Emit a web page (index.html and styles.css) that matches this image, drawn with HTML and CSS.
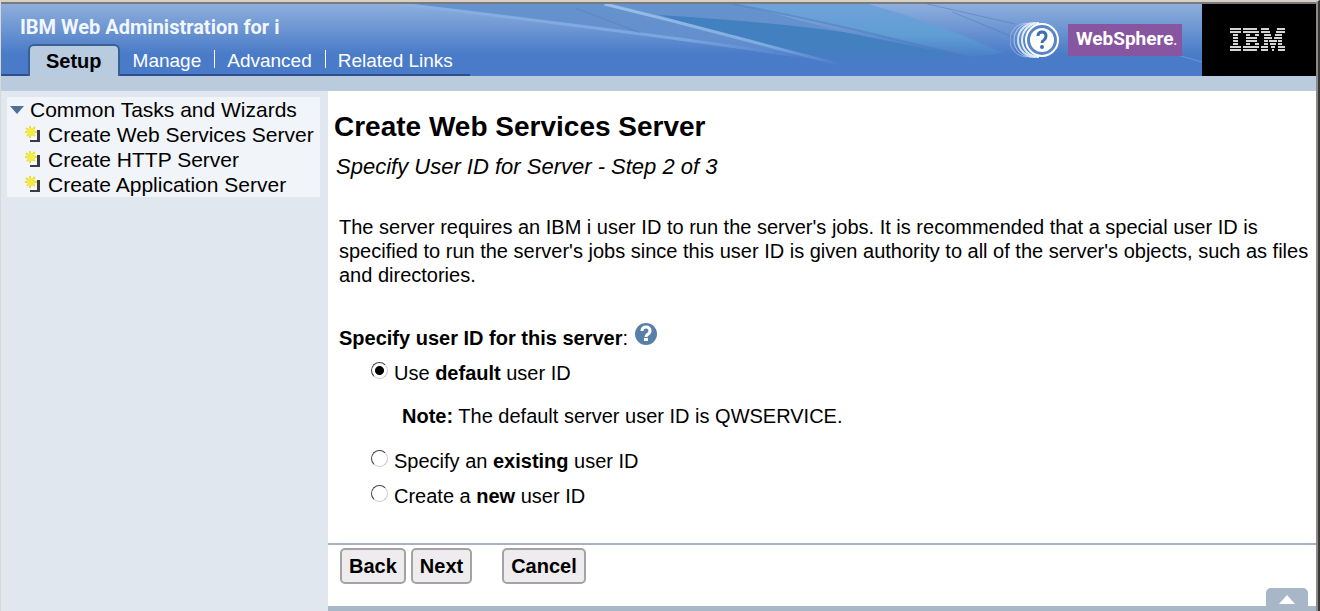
FILE: index.html
```html
<!DOCTYPE html>
<html lang="en">
<head>
<meta charset="utf-8">
<title>IBM Web Administration for i</title>
<link rel="stylesheet" href="styles.css">
</head>
<body>
<svg class="defs" aria-hidden="true">
  <symbol id="new-item" viewBox="0 0 15 17">
    <path d="M6 5h5v9H6z" fill="#fff"/>
    <path d="M12 4h3v12H5v-2h7z" fill="#3a3b44"/>
    <path d="M5 0v12M0 6h12M1 2l9 8M10 1l-8 9" stroke="#e9df45" stroke-width="2"/>
    <circle cx="6" cy="6" r="4" fill="#f3ea45"/>
  </symbol>
</svg>
<header class="banner">
  <svg class="waves" viewBox="0 0 1202 72" preserveAspectRatio="none" aria-hidden="true">
    <defs>
      <linearGradient id="ray" x2="0" y2="1"><stop stop-color="#6693cc"/><stop offset=".6" stop-color="#638fce"/><stop offset="1" stop-color="#5382cb"/></linearGradient>
      <linearGradient id="base" x2="0" y2="1"><stop stop-color="#4280c0"/><stop offset=".6" stop-color="#4280c0"/><stop offset="1" stop-color="#4a7bc8"/></linearGradient>
      <linearGradient id="sky" x2="0" y2="1"><stop stop-color="#70a2d8"/><stop offset=".6" stop-color="#5f9dd3"/><stop offset="1" stop-color="#4a7fc8"/></linearGradient>
      <linearGradient id="beam" gradientUnits="userSpaceOnUse" x1="600" y1="0" x2="840" y2="0"><stop stop-color="#9cc0ea"/><stop offset=".7" stop-color="#7caae0"/><stop offset="1" stop-color="#4a7bc8"/></linearGradient>
      <linearGradient id="beam2" gradientUnits="userSpaceOnUse" x1="400" y1="0" x2="810" y2="0"><stop stop-color="#8bb1e3"/><stop offset=".7" stop-color="#78a5df"/><stop offset="1" stop-color="#4a7bc8"/></linearGradient>
    </defs>
    <path d="M400 0H740L843 28 969 53 850 60 780 51 641 30z" fill="url(#ray)"/>
    <path d="M658 11Q760 17 843 28L969 53Q920 64 835 60L738 34z" fill="url(#base)"/>
    <path d="M733 0H868Q940 20 1003 49L969 53 856 26z" fill="url(#sky)"/>
    <path d="M733 0Q800 13 856 26L969 53" fill="none" stroke="#4b79b8" stroke-width="2" opacity=".45"/>
    <path d="M400 0Q520 14 641 30T810 54" fill="none" stroke="url(#beam2)" stroke-width="3"/>
    <path d="M604 0Q670 16 738 34T838 60" fill="none" stroke="url(#beam)" stroke-width="3"/>
    <path d="M927 0 1015 20M952 8 1020 36M575 4l65 25" fill="none" stroke="#5079b4" opacity=".5"/>
    <path d="M1090 34Q1150 42 1202 58" fill="none" stroke="#7da5df" opacity=".7"/>
  </svg>
  <div class="heading">
    <div class="product">IBM Web Administration for i</div>
    <nav class="tabs">
      <a class="tab active" href="#setup">Setup</a>
      <a class="tab" href="#manage">Manage</a>
      <a class="tab" href="#advanced">Advanced</a>
      <a class="tab" href="#links">Related Links</a>
    </nav>
  </div>
  <div class="brands">
    <a class="help-link" href="#help" aria-label="Help">
      <svg width="50" height="38" viewBox="0 0 50 38" fill="none" stroke="#e4eefa" aria-hidden="true">
        <path d="M17 2A17 17 0 0 0 17 36" opacity=".4"/>
        <path d="M21 2A17 17 0 0 0 21 36" opacity=".65"/>
        <path d="M25 2A17 17 0 0 0 25 36" stroke-width="2" opacity=".85"/>
        <path d="M29 2A17 17 0 0 0 29 36" stroke-width="2"/>
        <circle cx="32" cy="19" r="16" fill="#5686c8" stroke="#fff" stroke-width="2"/>
        <circle cx="32" cy="19" r="12" fill="#fff" stroke="none"/>
        <path d="M28 15q0-4 4-4t4 4q0 2-2 4-2 1-2 3" stroke="#3e6faf" stroke-width="3"/>
        <circle cx="32" cy="26" r="2" fill="#3e6faf" stroke="none"/>
      </svg>
    </a>
    <span class="websphere">WebSphere<small>.</small></span>
  </div>
  <div class="ibm">
    <svg width="55" height="24" viewBox="0 0 55 24" role="img" aria-label="IBM">
      <path stroke="#d4d4d4" stroke-width="2" d="M0 1h11M0 4h11M3 7h5M3 10h5M3 13h5M3 16h5M0 19h11M0 22h11M13 1h14M13 4h16M16 7h4M25 7h4M16 10h11M16 13h11M16 16h4M25 16h4M13 19h16M13 22h14M31 1h8M47 1h8M31 4h9M46 4h9M34 7h7M45 7h7M34 10h8M44 10h8M34 13h4M39 13h8M48 13h4M34 16h4M40 16h6M48 16h4M31 19h7M41 19h4M48 19h7M31 22h7M42 22h2M48 22h7"/>
    </svg>
  </div>
</header>
<div class="band"></div>
<div class="layout">
  <aside class="sidebar">
    <nav class="tree" aria-label="Common tasks">
      <button class="group" type="button"><svg width="14" height="8" aria-hidden="true"><path d="M0 0h14L7 8z" fill="#4f7096"/></svg>Common Tasks and Wizards</button>
      <a href="#web-services"><svg width="15" height="17" aria-hidden="true"><use href="#new-item"/></svg>Create Web Services Server</a>
      <a href="#http"><svg width="15" height="17" aria-hidden="true"><use href="#new-item"/></svg>Create HTTP Server</a>
      <a href="#application"><svg width="15" height="17" aria-hidden="true"><use href="#new-item"/></svg>Create Application Server</a>
    </nav>
  </aside>
  <main class="content">
    <form class="wizard">
      <div class="body">
        <h1>Create Web Services Server</h1>
        <p class="step">Specify User ID for Server - Step 2 of 3</p>
        <p class="intro">The server requires an IBM i user ID to run the server's jobs. It is recommended that a special user ID is specified to run the server's jobs since this user ID is given authority to all of the server's objects, such as files and directories.</p>
        <fieldset>
          <legend><b>Specify user ID for this server</b>:
            <a href="#user-id-help" aria-label="Help for user ID"><svg width="24" height="24" viewBox="0 0 24 24" aria-hidden="true"><circle cx="12" cy="12" r="11" fill="#587fa9"/><path d="M8 9q0-4 4-4t4 4q0 2-3 4-1 1-1 2" fill="none" stroke="#fff" stroke-width="3"/><path d="M10 16h4v3h-4z" fill="#fff"/></svg></a>
          </legend>
          <label class="choice"><input type="radio" name="user" checked><span>Use <b>default</b> user ID</span></label>
          <p class="note"><b>Note:</b> The default server user ID is QWSERVICE.</p>
          <label class="choice"><input type="radio" name="user"><span>Specify an <b>existing</b> user ID</span></label>
          <label class="choice"><input type="radio" name="user"><span>Create a <b>new</b> user ID</span></label>
        </fieldset>
      </div>
      <div class="actions">
        <button type="button">Back</button>
        <button type="button">Next</button>
        <button class="cancel" type="button">Cancel</button>
      </div>
    </form>
    <div class="footer"><button class="expand" type="button" aria-label="Expand panel"><svg width="16" height="9" aria-hidden="true"><path d="M0 9 8 0l8 9z" fill="#fff"/></svg></button></div>
  </main>
</div>
</body>
</html>
```
FILE: styles.css
```css
* { box-sizing: border-box; }
body {
  margin: 0;
  min-height: 100vh;
  display: flex;
  flex-direction: column;
  border-top: 2px solid #d8d0c4;
  border-left: 1px solid #d8d8d8;
  border-right: 4px ridge #8d8b86;
  background: #fff;
  color: #000;
  font: 20px/24px "Liberation Sans", Arial, sans-serif;
}
a { color: inherit; text-decoration: none; }
p { margin: 0; }
svg { display: block; flex: none; }
.defs { position: absolute; width: 0; height: 0; }
.banner {
  position: relative;
  display: flex;
  border-top: 2px solid #777b80;
  background: linear-gradient(#8eafdc, #4a7bc8 70%);
}
.waves { position: absolute; left: 0; top: 0; width: calc(100% - 114px); height: 100%; }
.heading { position: relative; flex: 1; }
.product {
  padding: 10px 0 0 19px;
  color: #f2f6ff;
  font: bold 20px/26px Roboto, "Liberation Sans", sans-serif;
}
.tabs { display: flex; width: 469px; padding: 4px 0 0 27px; box-shadow: inset 0 -2px #2d508c; }
.tab { position: relative; flex: none; margin-top: 2px; padding: 2px 13px; line-height: 26px; font-size: 19px; color: #fff; }
.tab + .tab + .tab::before { content: ""; position: absolute; left: 0; top: 4px; width: 1px; height: 18px; background: #fff; }
.active {
  margin-top: 0;
  padding: 2px 16px;
  border: 2px solid #395f93;
  border-bottom: 0;
  border-radius: 6px 6px 0 0;
  background: #b9cbde;
  color: #000;
  font-size: 20px;
  font-weight: bold;
}
.brands { position: relative; display: flex; align-items: center; gap: 8px; padding-right: 20px; }
.websphere {
  padding: 0 5px 0 8px;
  background: #8855a0;
  color: #fff;
  font: bold 19px/30px Roboto, "Liberation Sans", sans-serif;
}
.websphere small { font-size: 12px; }
.ibm { width: 114px; display: flex; align-items: center; justify-content: center; padding-right: 4px; background: #000; }
.band { height: 15px; background: #b9cbdd; }
.layout { flex: 1; display: flex; }
.sidebar { width: 327px; flex: none; padding: 6px 8px 0 6px; background: #e0e7ef; }
.tree { background: #f1f4f9; line-height: 25px; white-space: nowrap; }
.tree a, .group { display: flex; align-items: center; font-size: 21px; }
.tree a { gap: 8px; padding-left: 18px; }
.group { gap: 6px; padding: 0 0 0 3px; border: 0; background: none; color: inherit; font-family: inherit; line-height: 25px; }
.content { flex: 1; display: flex; flex-direction: column; min-width: 0; }
.wizard { flex: 1; }
.body { padding: 20px 4px 29px 11px; }
h1 { margin: 0 0 12px -5px; font-size: 28px; line-height: 32px; }
.step { margin-left: -3px; font-size: 22px; font-style: italic; }
.intro { margin-top: 36px; }
fieldset { margin: 35px 0 0; padding: 0; border: 0; }
legend { display: flex; align-items: center; gap: 6px; margin-bottom: 2px; padding: 0; line-height: 28px; }
legend b { margin-right: -6px; }
legend a { padding-bottom: 8px; }
.choice { display: flex; align-items: center; gap: 6px; margin-left: 32px; line-height: 35px; }
.choice input {
  appearance: none;
  width: 17px;
  height: 17px;
  margin: 0 0 6px;
  border: 1px solid;
  border-color: #444 #ccc #ccc #444;
  border-radius: 50%;
  background: #fff;
}
.choice input:checked { background: radial-gradient(circle, #000 4px, #fff 5px); }
.note { margin: 13px 0 16px 63px; }
.actions { display: flex; gap: 5px; padding: 3px 12px 22px; border-top: 2px solid #a9b0bf; }
.actions button {
  height: 36px;
  padding: 0 7px;
  border: 2px solid #a3a3a3;
  border-radius: 5px;
  background: #eeecee;
  color: #000;
  font: bold 20px/24px "Liberation Sans", Arial, sans-serif;
}
.actions .cancel { margin-left: 25px; }
.footer { position: relative; height: 5px; background: #a7b7c7; }
.expand {
  position: absolute;
  right: 8px;
  bottom: 0;
  width: 42px;
  height: 23px;
  display: grid;
  place-items: center;
  padding: 0;
  border: 0;
  border-radius: 5px 5px 0 0;
  background: #a7b7c7;
}
```
